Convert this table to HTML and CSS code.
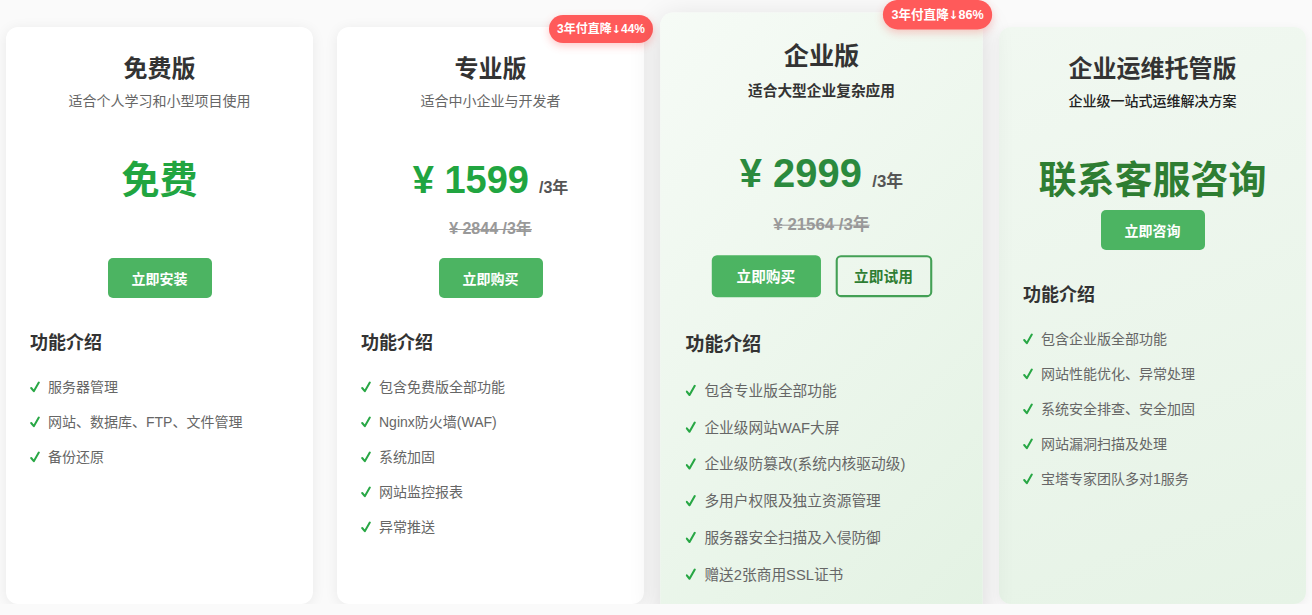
FILE: index.html
```html
<!DOCTYPE html>
<html lang="zh-CN">
<head>
    <meta charset="UTF-8">
    <meta name="viewport" content="width=device-width, initial-scale=1.0">
    <title>版本价格</title>
    <link rel="stylesheet" href="styles.css">
</head>
<body>
    <div class="plans">
        <!-- 免费版 -->
        <div class="plan">
            <h2 class="plan-title">免费版</h2>
            <p class="plan-desc">适合个人学习和小型项目使用</p>
            <div class="price-box">
                <div class="price">免费</div>
            </div>
            <div class="actions">
                <button class="btn">立即安装</button>
            </div>
            <div class="features">
                <h3 class="features-title">功能介绍</h3>
                <ul class="feature-list">
                    <li><svg class="check" viewBox="0 0 10 12"><path d="M1.2 7 L3.8 10.2 L8.8 1.5"/></svg>服务器管理</li>
                    <li><svg class="check" viewBox="0 0 10 12"><path d="M1.2 7 L3.8 10.2 L8.8 1.5"/></svg>网站、数据库、FTP、文件管理</li>
                    <li><svg class="check" viewBox="0 0 10 12"><path d="M1.2 7 L3.8 10.2 L8.8 1.5"/></svg>备份还原</li>
                </ul>
            </div>
        </div>

        <!-- 专业版 -->
        <div class="plan">
            <span class="badge">3年付直降<span class="arrow">↓</span>44%</span>
            <h2 class="plan-title">专业版</h2>
            <p class="plan-desc">适合中小企业与开发者</p>
            <div class="price-box">
                <div class="price">¥ 1599<span class="unit">/3年</span></div>
                <div class="old-price">¥ 2844 /3年</div>
            </div>
            <div class="actions">
                <button class="btn">立即购买</button>
            </div>
            <div class="features">
                <h3 class="features-title">功能介绍</h3>
                <ul class="feature-list">
                    <li><svg class="check" viewBox="0 0 10 12"><path d="M1.2 7 L3.8 10.2 L8.8 1.5"/></svg>包含免费版全部功能</li>
                    <li><svg class="check" viewBox="0 0 10 12"><path d="M1.2 7 L3.8 10.2 L8.8 1.5"/></svg>Nginx防火墙(WAF)</li>
                    <li><svg class="check" viewBox="0 0 10 12"><path d="M1.2 7 L3.8 10.2 L8.8 1.5"/></svg>系统加固</li>
                    <li><svg class="check" viewBox="0 0 10 12"><path d="M1.2 7 L3.8 10.2 L8.8 1.5"/></svg>网站监控报表</li>
                    <li><svg class="check" viewBox="0 0 10 12"><path d="M1.2 7 L3.8 10.2 L8.8 1.5"/></svg>异常推送</li>
                </ul>
            </div>
        </div>

        <!-- 企业版 (推荐) -->
        <div class="plan plan-featured">
            <span class="badge">3年付直降<span class="arrow">↓</span>86%</span>
            <h2 class="plan-title">企业版</h2>
            <p class="plan-desc">适合大型企业复杂应用</p>
            <div class="price-box">
                <div class="price">¥ 2999<span class="unit">/3年</span></div>
                <div class="old-price">¥ 21564 /3年</div>
            </div>
            <div class="actions">
                <button class="btn">立即购买</button>
                <button class="btn btn-outline">立即试用</button>
            </div>
            <div class="features">
                <h3 class="features-title">功能介绍</h3>
                <ul class="feature-list">
                    <li><svg class="check" viewBox="0 0 10 12"><path d="M1.2 7 L3.8 10.2 L8.8 1.5"/></svg>包含专业版全部功能</li>
                    <li><svg class="check" viewBox="0 0 10 12"><path d="M1.2 7 L3.8 10.2 L8.8 1.5"/></svg>企业级网站WAF大屏</li>
                    <li><svg class="check" viewBox="0 0 10 12"><path d="M1.2 7 L3.8 10.2 L8.8 1.5"/></svg>企业级防篡改(系统内核驱动级)</li>
                    <li><svg class="check" viewBox="0 0 10 12"><path d="M1.2 7 L3.8 10.2 L8.8 1.5"/></svg>多用户权限及独立资源管理</li>
                    <li><svg class="check" viewBox="0 0 10 12"><path d="M1.2 7 L3.8 10.2 L8.8 1.5"/></svg>服务器安全扫描及入侵防御</li>
                    <li><svg class="check" viewBox="0 0 10 12"><path d="M1.2 7 L3.8 10.2 L8.8 1.5"/></svg>赠送2张商用SSL证书</li>
                </ul>
            </div>
        </div>

        <!-- 企业运维托管版 -->
        <div class="plan plan-managed">
            <h2 class="plan-title">企业运维托管版</h2>
            <p class="plan-desc">企业级一站式运维解决方案</p>
            <div class="price-box">
                <div class="price">联系客服咨询</div>
            </div>
            <div class="actions">
                <button class="btn">立即咨询</button>
            </div>
            <div class="features">
                <h3 class="features-title">功能介绍</h3>
                <ul class="feature-list">
                    <li><svg class="check" viewBox="0 0 10 12"><path d="M1.2 7 L3.8 10.2 L8.8 1.5"/></svg>包含企业版全部功能</li>
                    <li><svg class="check" viewBox="0 0 10 12"><path d="M1.2 7 L3.8 10.2 L8.8 1.5"/></svg>网站性能优化、异常处理</li>
                    <li><svg class="check" viewBox="0 0 10 12"><path d="M1.2 7 L3.8 10.2 L8.8 1.5"/></svg>系统安全排查、安全加固</li>
                    <li><svg class="check" viewBox="0 0 10 12"><path d="M1.2 7 L3.8 10.2 L8.8 1.5"/></svg>网站漏洞扫描及处理</li>
                    <li><svg class="check" viewBox="0 0 10 12"><path d="M1.2 7 L3.8 10.2 L8.8 1.5"/></svg>宝塔专家团队多对1服务</li>
                </ul>
            </div>
        </div>
    </div>
</body>
</html>
```

FILE: styles.css
```css
body {
    margin: 0;
    background: #fafafa;
    font-family: "Liberation Sans", "Noto Sans CJK SC", sans-serif;
    color: #333;
}

.plans {
    display: grid;
    grid-template-columns: repeat(4, 307px);
    gap: 24px;
    padding: 27px 6px 0;
}

.plan {
    position: relative;
    background: #fff;
    border-radius: 12px;
    padding: 28px 24px 17px;
    box-shadow: 0 2px 14px rgba(0,0,0,0.07);
    text-align: center;
}

.plan-featured {
    transform: scale(1.05);
    z-index: 2;
    background: linear-gradient(135deg, #f6fbf6 0%, #e3f2e3 100%);
    box-shadow: 0 8px 30px rgba(0,0,0,0.14);
}

.plan-managed {
    background: linear-gradient(160deg, #f1f8f1 0%, #e6f3e6 100%);
    box-shadow: 0 2px 10px rgba(0,0,0,0.05);
}

.badge {
    position: absolute;
    top: -12px;
    right: -9px;
    height: 28px;
    line-height: 28px;
    padding: 0 8px;
    border-radius: 14px;
    background: #ff5a5a;
    color: #fff;
    font-size: 12px;
    font-weight: bold;
    white-space: nowrap;
    box-shadow: 0 3px 8px rgba(255,80,80,0.3);
}

.arrow {
    font-family: "DejaVu Sans", sans-serif;
    font-size: 11px;
}

.plan-title {
    margin: 0;
    font-size: 24px;
    line-height: 28px;
    font-weight: bold;
    color: #333;
}

.plan-desc {
    margin: 8px 0 0;
    font-size: 14px;
    line-height: 20px;
    color: #666;
}

.plan-featured .plan-desc {
    font-weight: bold;
    color: #333;
}

.plan-managed .plan-desc {
    font-weight: 500;
    color: #222;
}

.price-box {
    margin-top: 45px;
    height: 77px;
}

.plan-managed .price-box {
    height: auto;
}

.price {
    font-size: 38px;
    line-height: 48px;
    font-weight: bold;
    color: #21a540;
}

.plan-featured .price {
    color: #2b8a3e;
}

.plan-managed .price {
    color: #2e7d32;
}

.unit {
    margin-left: 10px;
    font-size: 16px;
    color: #555;
}

.old-price {
    margin-top: 5px;
    font-size: 16px;
    line-height: 24px;
    font-weight: bold;
    color: #999;
    text-decoration: line-through;
}

.actions {
    display: flex;
    justify-content: center;
    gap: 14px;
    margin-top: 25px;
}

.plan-managed .actions {
    margin-top: 6px;
}

.btn {
    height: 40px;
    padding: 0 24px;
    border: none;
    border-radius: 5px;
    background: #4cb462;
    color: #fff;
    font-family: inherit;
    font-size: 14px;
    font-weight: bold;
    cursor: pointer;
}

.btn-outline {
    padding: 0 16px;
    background: transparent;
    border: 2px solid #43a055;
    color: #2e7d32;
}

.features {
    margin-top: 33px;
    text-align: left;
}

.features-title {
    margin: 0;
    font-size: 18px;
    line-height: 24px;
    font-weight: bold;
    color: #333;
}

.feature-list {
    list-style: none;
    margin: 22px 0 0;
    padding: 0;
}

.feature-list li {
    display: flex;
    align-items: center;
    font-size: 14px;
    line-height: 20px;
    margin-bottom: 15px;
    color: #666;
}

.check {
    width: 10px;
    height: 12px;
    margin-right: 8px;
    fill: none;
    stroke: #28a745;
    stroke-width: 2;
    stroke-linecap: round;
    stroke-linejoin: round;
}
```
